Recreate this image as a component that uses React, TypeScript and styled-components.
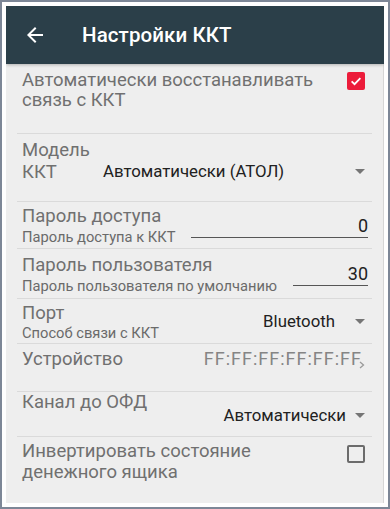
import React, { FC } from 'react';
import styled, { createGlobalStyle } from 'styled-components';

const GlobalStyle = createGlobalStyle`
  html, body {
    margin: 0;
    padding: 0;
    background: #ffffff;
  }
  body {
    font-family: Roboto, "Noto Sans", "Liberation Sans", sans-serif;
  }
`;

const Frame = styled.div`
  box-sizing: border-box;
  width: 390px;
  height: 509px;
  border: 2px solid #7d8797;
  padding: 4px;
  background: #ffffff;
`;

const Screen = styled.div`
  display: flex;
  flex-direction: column;
  height: 100%;
  overflow: hidden;
`;

const Toolbar = styled.header`
  position: relative;
  z-index: 1;
  display: flex;
  align-items: center;
  flex: 0 0 58px;
  background: #2b3f49;
  box-shadow: 0 1px 3px rgba(0, 0, 0, 0.25);
`;

const BackButton = styled.div`
  display: flex;
  align-items: center;
  justify-content: center;
  width: 24px;
  height: 24px;
  margin: 0 35px 0 17px;
  color: #ffffff;
`;

const Title = styled.h1`
  margin: 0;
  font-size: 20.5px;
  font-weight: 500;
  color: #ffffff;
  letter-spacing: 0.1px;
`;

const Content = styled.main`
  flex: 1;
  display: flex;
  flex-direction: column;
  background: #eeeeee;
  border-right: 1px solid #d6d6d6;
`;

const Row = styled.section<{ $h?: number; $pt: number; $first?: boolean }>`
  box-sizing: border-box;
  display: flex;
  align-items: flex-start;
  margin: 0 11px;
  padding: ${p => p.$pt}px 7px 0 5px;
  border-top: ${p => (p.$first ? 'none' : '1px solid #dadada')};
  ${p => (p.$h ? `height: ${p.$h}px;` : 'flex: 1;')}
`;

const LabelBlock = styled.div<{ $w?: number }>`
  ${p => (p.$w ? `flex: 0 0 ${p.$w}px;` : 'flex: 0 1 auto;')}
`;

const Label = styled.div<{ $lh?: number }>`
  font-size: 18.5px;
  line-height: ${p => p.$lh ?? 21}px;
  color: #707070;
  white-space: nowrap;
`;

const Summary = styled.div<{ $mt: number }>`
  margin-top: ${p => p.$mt}px;
  font-size: 14.7px;
  line-height: 16px;
  color: #6a6a6a;
  white-space: nowrap;
`;

const Spacer = styled.div`
  flex: 1;
`;

const Control = styled.div<{ $mt: number }>`
  display: flex;
  align-items: center;
  margin-top: ${p => p.$mt}px;
`;

const Value = styled.span`
  font-size: 16.8px;
  line-height: 20px;
  color: #212121;
  white-space: nowrap;
`;

const Address = styled.span`
  font-size: 18px;
  line-height: 20px;
  letter-spacing: 1px;
  color: #858585;
  white-space: nowrap;
`;

const Spinner = styled.div<{ $mt: number; $gap: number; $fill?: boolean }>`
  display: flex;
  align-items: center;
  margin-top: ${p => p.$mt}px;
  ${p => (p.$fill ? 'flex: 1;' : '')}

  > svg {
    margin-left: ${p => p.$gap}px;
    flex: 0 0 auto;
  }
`;

const InputBox = styled.div<{ $mt: number }>`
  flex: 1;
  margin: ${p => p.$mt}px -3px 0 16px;
  padding-bottom: 1px;
  border-bottom: 1px solid #555555;
  text-align: right;
  font-size: 18px;
  line-height: 20px;
  color: #212121;
`;

const Check = styled.div<{ $checked?: boolean }>`
  box-sizing: border-box;
  width: 18px;
  height: 18px;
  border-radius: 2px;
  display: flex;
  align-items: center;
  justify-content: center;
  background: ${p => (p.$checked ? '#ec1c3a' : 'transparent')};
  border: ${p => (p.$checked ? 'none' : '2px solid #6b6b6b')};
`;

const Chevron = styled.svg`
  margin: 12px 0 0 -3px;
`;

const Triangle: FC = () => (
  <svg width="10" height="5" viewBox="0 0 10 5">
    <path d="M0 0 L10 0 L5 5 Z" fill="#757575" />
  </svg>
);

const CheckMark = () => (
  <svg width="14" height="14" viewBox="0 0 24 24">
    <path d="M4.5 12.5 L9.5 17.5 L19.5 7" stroke="#ffffff" strokeWidth="3" fill="none" />
  </svg>
);

const BackArrow = () => (
  <svg width="24" height="24" viewBox="0 0 24 24">
    <path d="M20 11H7.83l5.59-5.59L12 4l-8 8 8 8 1.41-1.41L7.83 13H20v-2z" fill="#ffffff" />
  </svg>
);

export default function App() {
  return (
    <>
      <GlobalStyle />
      <Frame>
        <Screen>
          <Toolbar>
            <BackButton>
              <BackArrow />
            </BackButton>
            <Title>Настройки ККТ</Title>
          </Toolbar>
          <Content>
            <Row $first $h={69} $pt={6}>
              <LabelBlock>
                <Label $lh={20}>
                  Автоматически восстанавливать
                  <br />
                  связь с ККТ
                </Label>
              </LabelBlock>
              <Spacer />
              <Control $mt={2}>
                <Check $checked>
                  <CheckMark />
                </Check>
              </Control>
            </Row>

            <Row $h={68} $pt={5}>
              <LabelBlock $w={81}>
                <Label $lh={22}>
                  Модель
                  <br />
                  ККТ
                </Label>
              </LabelBlock>
              <Spinner $mt={22} $gap={0} $fill>
                <Value>Автоматически (АТОЛ)</Value>
                <Spacer />
                <Triangle />
              </Spinner>
            </Row>

            <Row $h={47} $pt={4}>
              <LabelBlock>
                <Label>Пароль доступа</Label>
                <Summary $mt={2}>Пароль доступа к ККТ</Summary>
              </LabelBlock>
              <InputBox $mt={10}>0</InputBox>
            </Row>

            <Row $h={50} $pt={6}>
              <LabelBlock>
                <Label>Пароль пользователя</Label>
                <Summary $mt={2}>Пароль пользователя по умолчанию</Summary>
              </LabelBlock>
              <InputBox $mt={9}>30</InputBox>
            </Row>

            <Row $h={45} $pt={4}>
              <LabelBlock>
                <Label>Порт</Label>
                <Summary $mt={1}>Способ связи с ККТ</Summary>
              </LabelBlock>
              <Spacer />
              <Spinner $mt={8} $gap={20}>
                <Value>Bluetooth</Value>
                <Triangle />
              </Spinner>
            </Row>

            <Row $h={48} $pt={5}>
              <LabelBlock>
                <Label>Устройство</Label>
              </LabelBlock>
              <Spacer />
              <Control $mt={0}>
                <Address>FF:FF:FF:FF:FF:FF</Address>
                <Chevron width="6" height="8" viewBox="0 0 6 8">
                  <path d="M1 1 L4.5 4 L1 7" stroke="#9a9a9a" strokeWidth="1.3" fill="none" />
                </Chevron>
              </Control>
            </Row>

            <Row $h={45} $pt={0}>
              <LabelBlock>
                <Label>Канал до ОФД</Label>
              </LabelBlock>
              <Spacer />
              <Spinner $mt={13} $gap={9}>
                <Value>Автоматически</Value>
                <Triangle />
              </Spinner>
            </Row>

            <Row $pt={4}>
              <LabelBlock>
                <Label>
                  Инвертировать состояние
                  <br />
                  денежного ящика
                </Label>
              </LabelBlock>
              <Spacer />
              <Control $mt={4}>
                <Check />
              </Control>
            </Row>
          </Content>
        </Screen>
      </Frame>
    </>
  );
}
